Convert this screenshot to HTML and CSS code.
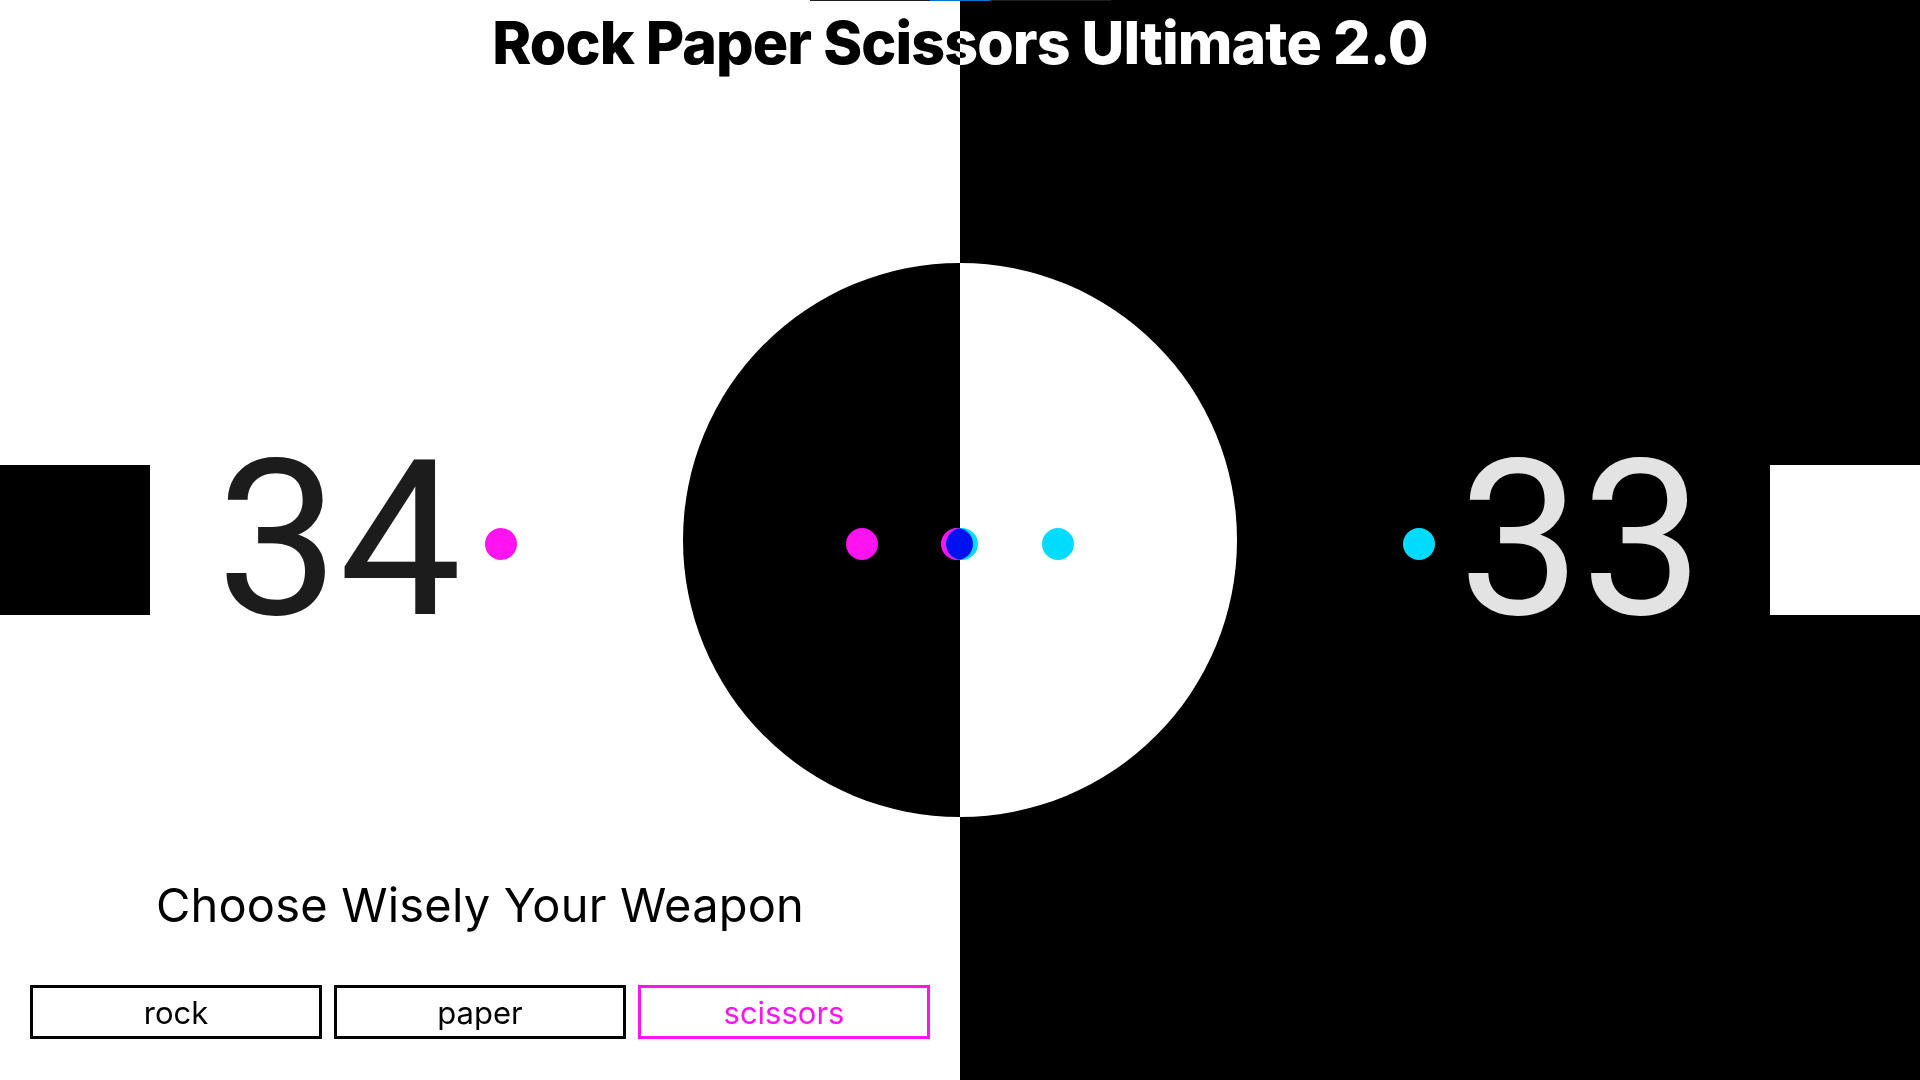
FILE: index.html
```html
<!DOCTYPE html>
<html lang="en">
<head>
<meta charset="utf-8">
<title>Rock Paper Scissors Ultimate 2.0</title>
<link rel="stylesheet" href="styles.css">
</head>
<body>
<main class="stage">
  <div class="halves">
    <section class="half half-light">
      <p class="prompt">Choose Wisely Your Weapon</p>
      <div class="weapons">
        <button class="weapon">rock</button>
        <button class="weapon">paper</button>
        <button class="weapon weapon-active">scissors</button>
      </div>
    </section>
    <section class="half half-dark"></section>
  </div>

  <div class="progress"><span class="progress-fill"></span></div>

  <header class="header">
    <h1 class="title">Rock Paper Scissors Ultimate 2.0</h1>
  </header>

  <div class="arena">
    <div class="side side-left">
      <div class="block"></div>
      <div class="score">34</div>
      <span class="dot dot-magenta"></span>
    </div>
    <div class="ring-cell">
      <div class="ring"></div>
      <div class="ring-dots">
        <span class="dot dot-magenta"></span>
        <svg class="clash" width="38" height="32" viewBox="0 0 38 32">
          <defs>
            <clipPath id="clashClip"><circle cx="16" cy="16" r="16"/></clipPath>
          </defs>
          <circle cx="16" cy="16" r="16" fill="#ff13f0"/>
          <circle cx="21" cy="16" r="16" fill="#00dcff"/>
          <circle cx="21" cy="16" r="16" fill="#0011f0" clip-path="url(#clashClip)"/>
        </svg>
        <span class="dot dot-cyan"></span>
      </div>
    </div>
    <div class="side side-right">
      <div class="block"></div>
      <div class="score">33</div>
      <span class="dot dot-cyan"></span>
    </div>
  </div>
</main>
</body>
</html>
```

FILE: styles.css
```css
* { box-sizing: border-box; }
html, body { margin: 0; padding: 0; }
body {
  width: 1920px;
  height: 1080px;
  overflow: hidden;
  font-family: "Inter", "Noto Sans", sans-serif;
}
.stage {
  width: 1920px;
  height: 1080px;
  display: grid;
  grid-template: 1fr / 1fr;
  isolation: isolate;
  background: #000;
}
.halves, .header, .arena, .progress { grid-area: 1 / 1; }

.halves {
  display: grid;
  grid-template-columns: 960px 960px;
}
.half-light {
  background: #fff;
  display: flex;
  flex-direction: column;
  justify-content: flex-end;
  align-items: stretch;
  padding: 0 30px 41px;
}
.half-dark { background: #000; }

.prompt {
  margin: 0 0 52px;
  text-align: center;
  font-size: 47px;
  font-weight: 400;
  color: #000;
  line-height: 1.2;
  letter-spacing: 0.2px;
}
.weapons {
  display: grid;
  grid-template-columns: repeat(3, 1fr);
  gap: 12px;
}
.weapon {
  height: 54px;
  border: 3px solid #000;
  background: transparent;
  font-family: "Inter", "Noto Sans", sans-serif;
  font-size: 31px;
  color: #000;
  padding: 0;
  cursor: pointer;
}
.weapon-active {
  border-color: #ff13f0;
  color: #ff13f0;
}

.progress {
  align-self: start;
  justify-self: center;
  z-index: 3;
  width: 301px;
  height: 1px;
  background: #1e1e1e;
  display: flex;
  padding-left: 120px;
}
.progress-fill {
  width: 60px;
  height: 1px;
  background: #0078d4;
}

.header {
  align-self: start;
  display: flex;
  flex-direction: column;
  align-items: center;
  mix-blend-mode: difference;
  pointer-events: none;
}
.title {
  margin: 8px 0 0;
  font-size: 59px;
  font-weight: 800;
  line-height: 1.2;
  letter-spacing: -0.9px;
  color: #fff;
}

.arena {
  align-self: center;
  display: grid;
  grid-template-columns: 1fr 554px 1fr;
  align-items: center;
  pointer-events: none;
}
.side {
  display: flex;
  align-items: center;
}
.side-right { flex-direction: row-reverse; }
.block {
  width: 150px;
  height: 150px;
  background: #fff;
  mix-blend-mode: difference;
  flex: none;
}
.score {
  width: 258px;
  margin: 0 0 0 60px;
  text-align: center;
  font-family: "Roboto", "Inter", sans-serif;
  font-size: 218px;
  font-weight: 400;
  line-height: 1;
  color: #e3e3e3;
  mix-blend-mode: difference;
}
.side-right .score { margin: 0 60px 0 0; }
.side .dot { margin: 8px 0 0 17px; }
.side-right .dot { margin: 8px 17px 0 0; }

.dot {
  display: block;
  width: 32px;
  height: 32px;
  border-radius: 50%;
  flex: none;
}
.dot-magenta { background: #ff13f0; }
.dot-cyan { background: #00dcff; }

.ring-cell {
  display: grid;
  grid-template: 554px / 554px;
}
.ring, .ring-dots { grid-area: 1 / 1; }
.ring {
  border-radius: 50%;
  background: #fff;
  mix-blend-mode: difference;
}
.ring-dots {
  z-index: 2;
  display: flex;
  justify-content: center;
  align-items: center;
  gap: 63px;
  padding-top: 8px;
}
.clash { display: block; }
```
